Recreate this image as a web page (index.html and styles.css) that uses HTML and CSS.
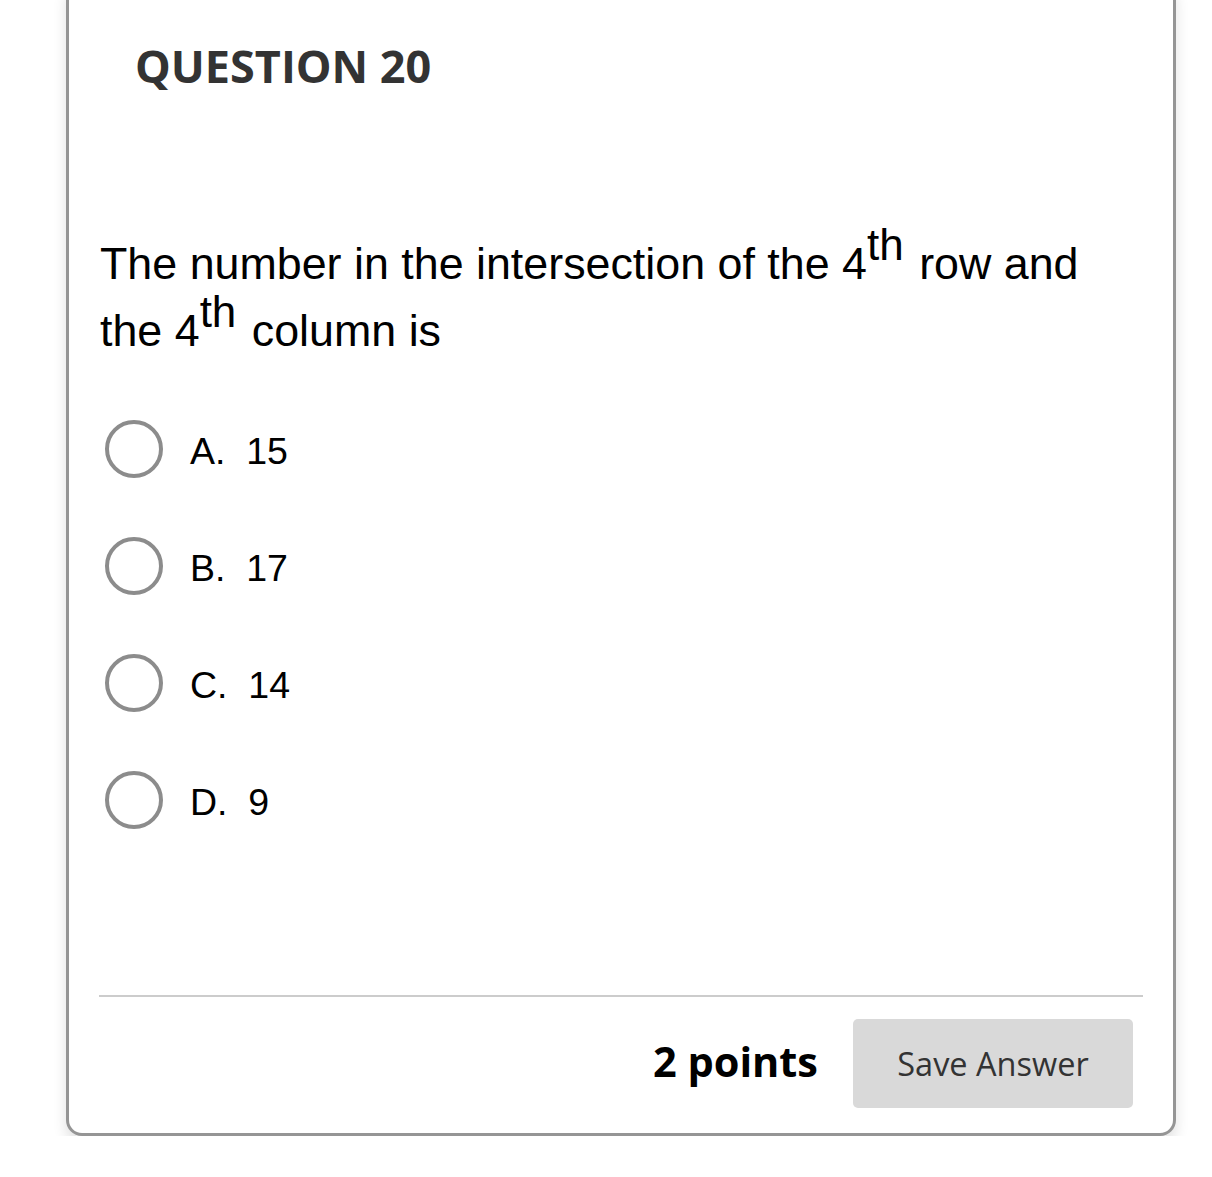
FILE: index.html
```html
<!DOCTYPE html>
<html>
<head>
<meta charset="utf-8">
<link rel="stylesheet" href="styles.css">
</head>
<body>
<div class="card">
  <h2 class="title">QUESTION 20</h2>
  <p class="question">The number in the intersection of the 4<sup>th</sup> row and the 4<sup>th</sup> column is</p>
  <ul class="options">
    <li class="option"><span class="radio"></span><span class="label">A.&nbsp; 15</span></li>
    <li class="option"><span class="radio"></span><span class="label">B.&nbsp; 17</span></li>
    <li class="option"><span class="radio"></span><span class="label">C.&nbsp; 14</span></li>
    <li class="option"><span class="radio"></span><span class="label">D.&nbsp; 9</span></li>
  </ul>
  <hr class="divider">
  <div class="footer">
    <span class="points">2 points</span>
    <button class="save">Save Answer</button>
  </div>
</div>
</body>
</html>
```
FILE: styles.css
```css
html, body {
  margin: 0;
  padding: 0;
  background: #ffffff;
}
.card {
  box-sizing: border-box;
  width: 1110px;
  margin: -20px 0 0 66px;
  padding: 52px 0 25px 0;
  border: 3px solid #959595;
  border-radius: 16px;
  background: #ffffff;
  box-shadow: 0 8px 14px rgba(0, 0, 0, 0.12);
}
.title {
  margin: 0 0 0 66px;
  font-family: "Open Sans", sans-serif;
  font-weight: 700;
  font-size: 45px;
  line-height: 61px;
  color: #333333;
}
.question {
  margin: 134px 60px 0 31px;
  font-family: "Liberation Sans", Arial, sans-serif;
  font-size: 44.8px;
  line-height: 67px;
  color: #000000;
}
.question sup {
  font-size: 44px;
  line-height: 0;
  vertical-align: 19px;
  padding-right: 3px;
}
.options {
  list-style: none;
  margin: 56px 0 0 36px;
  padding: 0;
  display: flex;
  flex-direction: column;
  gap: 59px;
}
.option {
  display: flex;
  align-items: center;
  gap: 27px;
  height: 58px;
}
.radio {
  box-sizing: border-box;
  width: 58px;
  height: 58px;
  border: 4px solid #8c8c8c;
  border-radius: 50%;
  flex: none;
}
.label {
  font-family: "Liberation Sans", Arial, sans-serif;
  font-size: 37.5px;
  line-height: 40px;
  color: #000000;
  position: relative;
  top: 2px;
}
.divider {
  margin: 166px 30px 0 30px;
  border: none;
  height: 2px;
  background: #cccccc;
}
.footer {
  margin-top: 22px;
  padding-right: 40px;
  display: flex;
  justify-content: flex-end;
  align-items: center;
  gap: 35px;
}
.points {
  font-family: "Open Sans", sans-serif;
  font-weight: 700;
  font-size: 41.5px;
  color: #000000;
  position: relative;
  top: -3px;
}
.save {
  width: 280px;
  height: 89px;
  border: none;
  border-radius: 5px;
  background: #d9d9d9;
  font-family: "Open Sans", sans-serif;
  font-size: 32.5px;
  color: #333333;
  padding: 0;
}
```
